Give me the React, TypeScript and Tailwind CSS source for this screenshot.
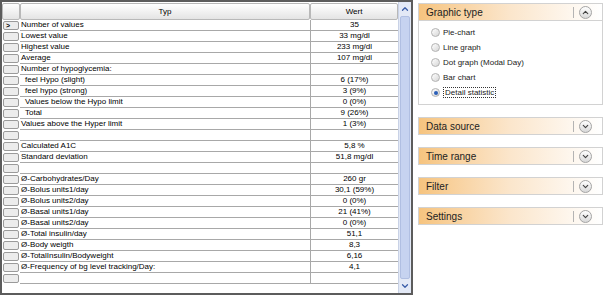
import { ChevronUp, ChevronDown } from "lucide-react";

type Row = { label: string; value: string; indent?: boolean };

const rows: Row[] = [
  { label: "Number of values", value: "35" },
  { label: "Lowest value", value: "33 mg/dl" },
  { label: "Highest value", value: "233 mg/dl" },
  { label: "Average", value: "107 mg/dl" },
  { label: "Number of hypoglycemia:", value: "" },
  { label: "feel Hypo (slight)", value: "6 (17%)", indent: true },
  { label: "feel hypo (strong)", value: "3 (9%)", indent: true },
  { label: "Values below the Hypo limit", value: "0 (0%)", indent: true },
  { label: "Total", value: "9 (26%)", indent: true },
  { label: "Values above the Hyper limit", value: "1 (3%)" },
  { label: "", value: "" },
  { label: "Calculated A1C", value: "5,8 %" },
  { label: "Standard deviation", value: "51,8 mg/dl" },
  { label: "", value: "" },
  { label: "Ø-Carbohydrates/Day", value: "260 gr" },
  { label: "Ø-Bolus units1/day", value: "30,1 (59%)" },
  { label: "Ø-Bolus units2/day", value: "0 (0%)" },
  { label: "Ø-Basal units1/day", value: "21 (41%)" },
  { label: "Ø-Basal units2/day", value: "0 (0%)" },
  { label: "Ø-Total insulin/day", value: "51,1" },
  { label: "Ø-Body weigth", value: "8,3" },
  { label: "Ø-TotalInsulin/Bodyweight", value: "6,16" },
  { label: "Ø-Frequency of bg level tracking/Day:", value: "4,1" },
  { label: "", value: "" },
];

const graphTypes = ["Pie-chart", "Line graph", "Dot graph (Modal Day)", "Bar chart", "Detail statistic"];

function RoundButton({ up }: { up?: boolean }) {
  return (
    <div className="w-[13px] h-[13px] rounded-full border border-[#a4a4a4] bg-gradient-to-b from-white to-[#d8d8d8] flex items-center justify-center text-[#404040]">
      {up ? <ChevronUp size={9} strokeWidth={3} /> : <ChevronDown size={9} strokeWidth={3} />}
    </div>
  );
}

function PanelHeader({ title, up }: { title: string; up?: boolean }) {
  return (
    <div className="h-[18px] flex items-center border border-[#d2d2d2] bg-gradient-to-r from-[#f6c47f] via-[#fbe6cc] to-white pl-[7px] pr-[10px]">
      <span className="flex-1 text-[10px] text-[#222]">{title}</span>
      <div className="w-px h-[11px] bg-[#b4b4b4] mr-[5px]" />
      <RoundButton up={up} />
    </div>
  );
}

export default function App() {
  return (
    <div className="flex w-[605px] h-[296px] bg-white font-['Liberation_Sans',Arial,sans-serif] text-black">
      {/* Grid */}
      <div className="w-[413px] h-[295px] border-2 border-[#5c5c5c] flex shrink-0">
        <div className="flex-1 flex flex-col">
          {/* header */}
          <div className="h-[18px] flex text-[8px] pt-[1px]">
            <div className="w-[18px] border border-[#b8b8b8] rounded-[2px] bg-gradient-to-b from-white to-[#e4e4e4]" />
            <div className="w-[290px] border border-[#b8b8b8] rounded-[2px] bg-gradient-to-b from-white to-[#e4e4e4] flex items-center justify-center">Typ</div>
            <div className="flex-1 border border-[#b8b8b8] rounded-[2px] bg-gradient-to-b from-white to-[#e4e4e4] flex items-center justify-center">Wert</div>
          </div>
          {rows.map((r, i) => (
            <div key={i} className="h-[11px] flex text-[8px] leading-[10px]">
              <div className="w-[18px] px-[1px] py-[1px]">
                <div className="h-full border border-[#9a9a9a] rounded-[2px] bg-[#ececec] flex items-center pl-[2px]">
                  {i === 0 && <span className="text-[7px] font-bold leading-none">&gt;</span>}
                </div>
              </div>
              <div className={`w-[290px] border-b border-[#a8a8a8] whitespace-pre ${r.indent ? "pl-[5px]" : "pl-[1px]"}`}>
                {r.label}
              </div>
              <div className="flex-1 border-b border-l border-[#a8a8a8] text-center">{r.value}</div>
            </div>
          ))}
        </div>
        {/* scrollbar */}
        <div className="w-[13px] flex flex-col bg-[#e3e9f6] border-l border-[#c9d2e6]">
          <div className="h-[14px] flex items-center justify-center text-[#3a5da8]">
            <ChevronUp size={10} strokeWidth={3} />
          </div>
          <div className="flex-1 mx-[1px] bg-[#c6d3f0] border border-[#b0bfe2] rounded-[2px]" />
          <div className="h-[14px] flex items-center justify-center text-[#3a5da8]">
            <ChevronDown size={10} strokeWidth={3} />
          </div>
        </div>
      </div>

      {/* Right panel */}
      <div className="ml-[5px] w-[185px] pt-[3px] flex flex-col">
        <PanelHeader title="Graphic type" up />
        <div className="border border-t-0 border-[#d2d2d2] pt-[4px] pb-[4px] pl-[12px]">
          {graphTypes.map((g, i) => (
            <div key={g} className="h-[15px] flex items-center gap-[3px] text-[8px] text-[#222]">
              <div className="w-[9px] h-[9px] rounded-full border border-[#b2b2b2] bg-gradient-to-br from-white to-[#d6d6d6] flex items-center justify-center">
                {i === 4 && <div className="w-[4px] h-[4px] rounded-full bg-[#2b5fb8]" />}
              </div>
              <span className={i === 4 ? "border border-dotted border-[#333] px-[1px] leading-[9px]" : ""}>{g}</span>
            </div>
          ))}
        </div>
        <div className="mt-[12px] flex flex-col gap-[12px]">
          <PanelHeader title="Data source" />
          <PanelHeader title="Time range" />
          <PanelHeader title="Filter" />
          <PanelHeader title="Settings" />
        </div>
      </div>
    </div>
  );
}
